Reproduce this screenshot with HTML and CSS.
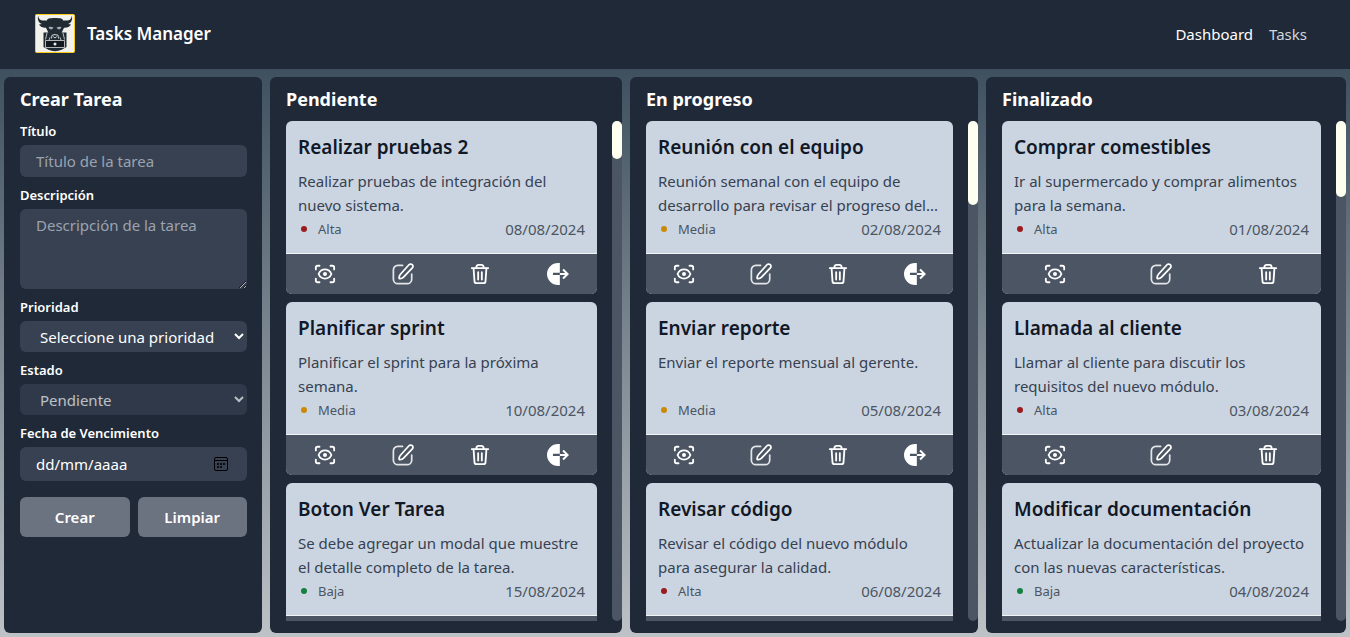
FILE: index.html
```html
<!DOCTYPE html>
<html lang="es">
<head>
<meta charset="utf-8">
<meta name="viewport" content="width=device-width, initial-scale=1">
<title>Tasks Manager</title>
<link rel="stylesheet" href="styles.css">
</head>
<body>
<svg class="sprite" aria-hidden="true">
  <symbol id="i-view" viewBox="0 0 24 24"><g fill="none" stroke="currentColor" stroke-width="2" stroke-linecap="round" stroke-linejoin="round"><path d="M2 7V5a2 2 0 0 1 2-2h2M18 3h2a2 2 0 0 1 2 2v2M22 17v2a2 2 0 0 1-2 2h-2M6 21H4a2 2 0 0 1-2-2v-2"/><path d="M5 12c1.300-3.200 4-5 7-5s5.700 1.800 7 5c-1.300 3.200-4 5-7 5s-5.700-1.800-7-5z"/></g><circle cx="12" cy="12" r="2.200" fill="currentColor"/></symbol>
  <symbol id="i-edit" viewBox="0 0 24 24"><g fill="none" stroke="currentColor" stroke-width="1.900" stroke-linecap="round" stroke-linejoin="round"><path opacity=".85" d="M11.500 2.600H6.500a5 5 0 0 0-5 5v10a5 5 0 0 0 5 5h10a5 5 0 0 0 5-5v-5.500"/><path d="M18.500 1.900a2.500 2.500 0 0 1 3.700 3.500L12.600 15.500c-1 1-2.500 1.700-4 1.600-.6 0-.9-.4-.9-.9 0-1.500.5-2.800 1.500-3.900z"/></g></symbol>
  <symbol id="i-trash" viewBox="0 0 24 24"><g fill="none" stroke="currentColor" stroke-width="2" stroke-linejoin="round" stroke-linecap="round"><path d="M3 5.500h18M8 5C8 3 9 2 10.500 2h3C15 2 16 3 16 5"/><path d="M5 6l1 14c.1 1.400.9 2 2.200 2h7.600c1.300 0 2.100-.6 2.200-2l1-14M10 10v8M14 10v8"/></g></symbol>
  <symbol id="i-move" viewBox="0 0 24 24"><path fill="currentColor" d="M14 0v10.500H6.500v2.600H14V24h-2A12 12 0 0 1 12 0z"/><path fill="none" stroke="currentColor" stroke-width="2.200" d="M14 12h9M17.500 7l5 5-5 5"/></symbol>
</svg>

<header class="topbar">
  <a class="brand" href="#">
    <svg class="logo" viewBox="0 0 40 39" aria-hidden="true">
      <rect x=".5" y=".5" width="39" height="38" rx="1" fill="#f3f1ec" stroke="#facc15"/>
      <path fill="#1f2a33" d="M8.500 18.500h23V33L27 35.500Q20 39 13 35.500L8.500 33z"/>
      <path fill="none" stroke="#e8e6e1" stroke-width=".8" d="M12 19l-1.500 6.500M28 19l1.500 6.500M15.500 22.500L14 26M24.500 22.500L26 26"/>
      <path fill="#1f2a33" d="M3.200 1.800C3.500 5 5 6.400 8 6.600l4-.2C12.200 4.700 14 4 20 4s7.800.7 8 2.400l4 .2c3-.2 4.500-1.600 4.800-4.800C37.800 5.500 36.500 9 33 10l3 .6c-1.500 2.400-4 3.400-7 3.200L26.500 19 24 24.500h-8L13.500 19 11 13.800c-3 .2-5.500-.8-7-3.200L7 10C3.500 9 2.200 5.500 3.200 1.800z"/>
      <path fill="#a5abb0" d="M13.500 13q2.500-.6 5 .6-.6 1.800-2.500 1.800T13.500 13zM26.500 13q-2.500-.6-5 .6.600 1.800 2.500 1.800t2.500-2.400z"/>
      <path fill="none" stroke="#e8e6e1" stroke-width=".9" d="M16.500 24.500l.5-3.300q3-1.200 6 0l.5 3.300M18.500 22.500q.2 1.200 1.500 1.300 1.300-.1 1.500-1.300"/>
      <path fill="#12191f" stroke="#dddcd8" stroke-width=".8" d="M10.500 26.500h19v7h-19z"/>
      <circle cx="20" cy="30" r="1.500" fill="#eee"/>
    </svg>
    <span>Tasks Manager</span>
  </a>
  <nav class="nav">
    <a class="current" href="#">Dashboard</a>
    <a href="#">Tasks</a>
  </nav>
</header>

<main class="board">
  <form class="panel form">
    <h2>Crear Tarea</h2>
    <div class="field">
      <label for="titulo">Título</label>
      <input id="titulo" type="text" placeholder="Título de la tarea">
    </div>
    <div class="field">
      <label for="descripcion">Descripción</label>
      <textarea id="descripcion" placeholder="Descripción de la tarea"></textarea>
    </div>
    <div class="field">
      <label for="prioridad">Prioridad</label>
      <select id="prioridad"><option>Seleccione una prioridad</option><option>Alta</option><option>Media</option><option>Baja</option></select>
    </div>
    <div class="field">
      <label for="estado">Estado</label>
      <select id="estado" disabled><option>Pendiente</option></select>
    </div>
    <div class="field">
      <label for="fecha">Fecha de Vencimiento</label>
      <div class="date">
        <input id="fecha" type="text" placeholder="dd/mm/aaaa">
        <button type="button" aria-label="Abrir calendario"><svg viewBox="0 0 14 14" aria-hidden="true"><path fill="none" stroke="#000" d="M2 .5h10A1.500 1.500 0 0 1 13.500 2v10a1.500 1.500 0 0 1-1.500 1.500H2A1.500 1.500 0 0 1 .5 12V2A1.500 1.500 0 0 1 2 .5zM.5 3.500h13"/><path opacity=".8" d="M6 6h2v2H6zM9 6h2v2H9zM3 6h2v2H3zM3 9h2v2H3zM6 9h2v2H6z"/></svg></button>
      </div>
    </div>
    <div class="actions">
      <button type="submit">Crear</button>
      <button type="reset">Limpiar</button>
    </div>
  </form>

  <section class="panel column">
    <h2>Pendiente</h2>
    <div class="scroller">
      <div class="list">
        <article class="card">
          <div class="body"><h3>Realizar pruebas 2</h3><p>Realizar pruebas de integración del nuevo sistema.</p><div class="meta"><span class="priority alta">Alta</span><time>08/08/2024</time></div></div>
          <div class="tools"><button type="button" aria-label="Ver"><svg><use href="#i-view"/></svg></button><button type="button" aria-label="Editar"><svg><use href="#i-edit"/></svg></button><button type="button" aria-label="Eliminar"><svg><use href="#i-trash"/></svg></button><button type="button" aria-label="Mover"><svg><use href="#i-move"/></svg></button></div>
        </article>
        <article class="card">
          <div class="body"><h3>Planificar sprint</h3><p>Planificar el sprint para la próxima semana.</p><div class="meta"><span class="priority media">Media</span><time>10/08/2024</time></div></div>
          <div class="tools"><button type="button" aria-label="Ver"><svg><use href="#i-view"/></svg></button><button type="button" aria-label="Editar"><svg><use href="#i-edit"/></svg></button><button type="button" aria-label="Eliminar"><svg><use href="#i-trash"/></svg></button><button type="button" aria-label="Mover"><svg><use href="#i-move"/></svg></button></div>
        </article>
        <article class="card">
          <div class="body"><h3>Boton Ver Tarea</h3><p>Se debe agregar un modal que muestre el detalle completo de la tarea.</p><div class="meta"><span class="priority baja">Baja</span><time>15/08/2024</time></div></div>
          <div class="tools"><button type="button" aria-label="Ver"><svg><use href="#i-view"/></svg></button><button type="button" aria-label="Editar"><svg><use href="#i-edit"/></svg></button><button type="button" aria-label="Eliminar"><svg><use href="#i-trash"/></svg></button><button type="button" aria-label="Mover"><svg><use href="#i-move"/></svg></button></div>
        </article>
      </div>
      <div class="track"><div class="thumb" style="height:7.6%"></div></div>
    </div>
  </section>

  <section class="panel column">
    <h2>En progreso</h2>
    <div class="scroller">
      <div class="list">
        <article class="card">
          <div class="body"><h3>Reunión con el equipo</h3><p>Reunión semanal con el equipo de desarrollo para revisar el progreso del...</p><div class="meta"><span class="priority media">Media</span><time>02/08/2024</time></div></div>
          <div class="tools"><button type="button" aria-label="Ver"><svg><use href="#i-view"/></svg></button><button type="button" aria-label="Editar"><svg><use href="#i-edit"/></svg></button><button type="button" aria-label="Eliminar"><svg><use href="#i-trash"/></svg></button><button type="button" aria-label="Mover"><svg><use href="#i-move"/></svg></button></div>
        </article>
        <article class="card">
          <div class="body"><h3>Enviar reporte</h3><p>Enviar el reporte mensual al gerente.</p><div class="meta"><span class="priority media">Media</span><time>05/08/2024</time></div></div>
          <div class="tools"><button type="button" aria-label="Ver"><svg><use href="#i-view"/></svg></button><button type="button" aria-label="Editar"><svg><use href="#i-edit"/></svg></button><button type="button" aria-label="Eliminar"><svg><use href="#i-trash"/></svg></button><button type="button" aria-label="Mover"><svg><use href="#i-move"/></svg></button></div>
        </article>
        <article class="card">
          <div class="body"><h3>Revisar código</h3><p>Revisar el código del nuevo módulo para asegurar la calidad.</p><div class="meta"><span class="priority alta">Alta</span><time>06/08/2024</time></div></div>
          <div class="tools"><button type="button" aria-label="Ver"><svg><use href="#i-view"/></svg></button><button type="button" aria-label="Editar"><svg><use href="#i-edit"/></svg></button><button type="button" aria-label="Eliminar"><svg><use href="#i-trash"/></svg></button><button type="button" aria-label="Mover"><svg><use href="#i-move"/></svg></button></div>
        </article>
      </div>
      <div class="track"><div class="thumb" style="height:16.8%"></div></div>
    </div>
  </section>

  <section class="panel column">
    <h2>Finalizado</h2>
    <div class="scroller">
      <div class="list">
        <article class="card">
          <div class="body"><h3>Comprar comestibles</h3><p>Ir al supermercado y comprar alimentos para la semana.</p><div class="meta"><span class="priority alta">Alta</span><time>01/08/2024</time></div></div>
          <div class="tools"><button type="button" aria-label="Ver"><svg><use href="#i-view"/></svg></button><button type="button" aria-label="Editar"><svg><use href="#i-edit"/></svg></button><button type="button" aria-label="Eliminar"><svg><use href="#i-trash"/></svg></button></div>
        </article>
        <article class="card">
          <div class="body"><h3>Llamada al cliente</h3><p>Llamar al cliente para discutir los requisitos del nuevo módulo.</p><div class="meta"><span class="priority alta">Alta</span><time>03/08/2024</time></div></div>
          <div class="tools"><button type="button" aria-label="Ver"><svg><use href="#i-view"/></svg></button><button type="button" aria-label="Editar"><svg><use href="#i-edit"/></svg></button><button type="button" aria-label="Eliminar"><svg><use href="#i-trash"/></svg></button></div>
        </article>
        <article class="card">
          <div class="body"><h3>Modificar documentación</h3><p>Actualizar la documentación del proyecto con las nuevas características.</p><div class="meta"><span class="priority baja">Baja</span><time>04/08/2024</time></div></div>
          <div class="tools"><button type="button" aria-label="Ver"><svg><use href="#i-view"/></svg></button><button type="button" aria-label="Editar"><svg><use href="#i-edit"/></svg></button><button type="button" aria-label="Eliminar"><svg><use href="#i-trash"/></svg></button></div>
        </article>
      </div>
      <div class="track"><div class="thumb" style="height:15.2%"></div></div>
    </div>
  </section>
</main>
</body>
</html>
```
FILE: styles.css
```css
* { box-sizing: border-box; margin: 0; }

body {
  display: flex;
  flex-direction: column;
  height: 100vh;
  background: linear-gradient(#2f4252, #bdc2c6);
  color: #fff;
  font: 15px/24px "Segoe UI", "Noto Sans", sans-serif;
}

a { color: inherit; text-decoration: none; }
button, input, select, textarea { font: inherit; color: inherit; border: 0; }
h2 { font-size: 18px; line-height: 28px; margin-bottom: 8px; }

.sprite { display: none; }

.topbar {
  display: flex;
  align-items: center;
  justify-content: space-between;
  padding: 14px 43px 16px 35px;
  background: #1f2937;
}
.brand { display: flex; align-items: center; gap: 12px; font-size: 17px; font-weight: 600; }
.logo { display: block; width: 40px; height: 39px; }
.nav { display: flex; gap: 16px; color: #d1d5db; }
.nav .current { color: #fff; }

.board {
  flex: 1;
  min-height: 0;
  display: grid;
  grid-template-columns: 258fr 352fr 348fr 360fr;
  grid-template-rows: minmax(0, 1fr);
  gap: 8px;
  padding: 8px 4px 4px;
}
.panel { min-width: 0; border-radius: 6px; background: #1f2937; }

.form { padding: 8px 15px 8px 16px; }
.field { display: flex; flex-direction: column; gap: 4px; margin-bottom: 8px; }
.field label { font-size: 13px; line-height: 20px; font-weight: 600; }
.field input, .field select, .field textarea {
  width: 100%;
  border-radius: 6px;
  background: #374151;
  padding: 4px 16px;
}
.field textarea { display: block; height: 80px; }
.field select { height: 31px; }
.field select:disabled { opacity: .7; }
.field ::placeholder { color: #9ca3af; opacity: 1; }
.date { position: relative; }
.date input { display: block; height: 34px; }
.date ::placeholder { color: #fff; }
.date button {
  position: absolute;
  top: 10px;
  right: 19px;
  width: 14px;
  height: 14px;
  padding: 0;
  background: none;
}
.date svg { display: block; }
.actions { display: flex; gap: 8px; margin-top: 16px; }
.actions button { flex: 1; height: 40px; border-radius: 6px; background: #6b7280; font-weight: 600; }

.column { display: flex; flex-direction: column; padding: 8px 0 12px 16px; }
.scroller { flex: 1; min-height: 0; display: flex; gap: 15px; }
.list {
  flex: 1;
  min-width: 0;
  display: flex;
  flex-direction: column;
  gap: 8px;
  overflow-y: auto;
  scrollbar-width: none;
}
.track { width: 10px; border-radius: 5px; background: #4b5563; }
.thumb { border-radius: 5px; background: #fffff0; }

.card { flex: none; border-radius: 6px; overflow: hidden; background: #cbd5e1; }
.body { padding: 12px; color: #374151; border-bottom: 1px solid #f3f4f6; }
.body h3 { margin-bottom: 8px; font-size: 19px; font-weight: 600; line-height: 28px; color: #111827; }
.body p { min-height: 48px; }
.meta { display: flex; justify-content: space-between; color: #4b5563; }
.priority { display: flex; align-items: center; gap: 11px; font-size: 13px; }
.priority::before { content: ""; width: 6px; height: 6px; margin-left: 3px; border-radius: 50%; background: currentColor; }
.alta::before { background: #991b1b; }
.media::before { background: #ca8a04; }
.baja::before { background: #15803d; }

.tools { display: flex; height: 40px; background: #4b5563; }
.tools button { flex: 1; display: flex; align-items: center; justify-content: center; padding: 0; background: none; color: #fff; }
.tools svg { width: 22px; height: 22px; }
```
